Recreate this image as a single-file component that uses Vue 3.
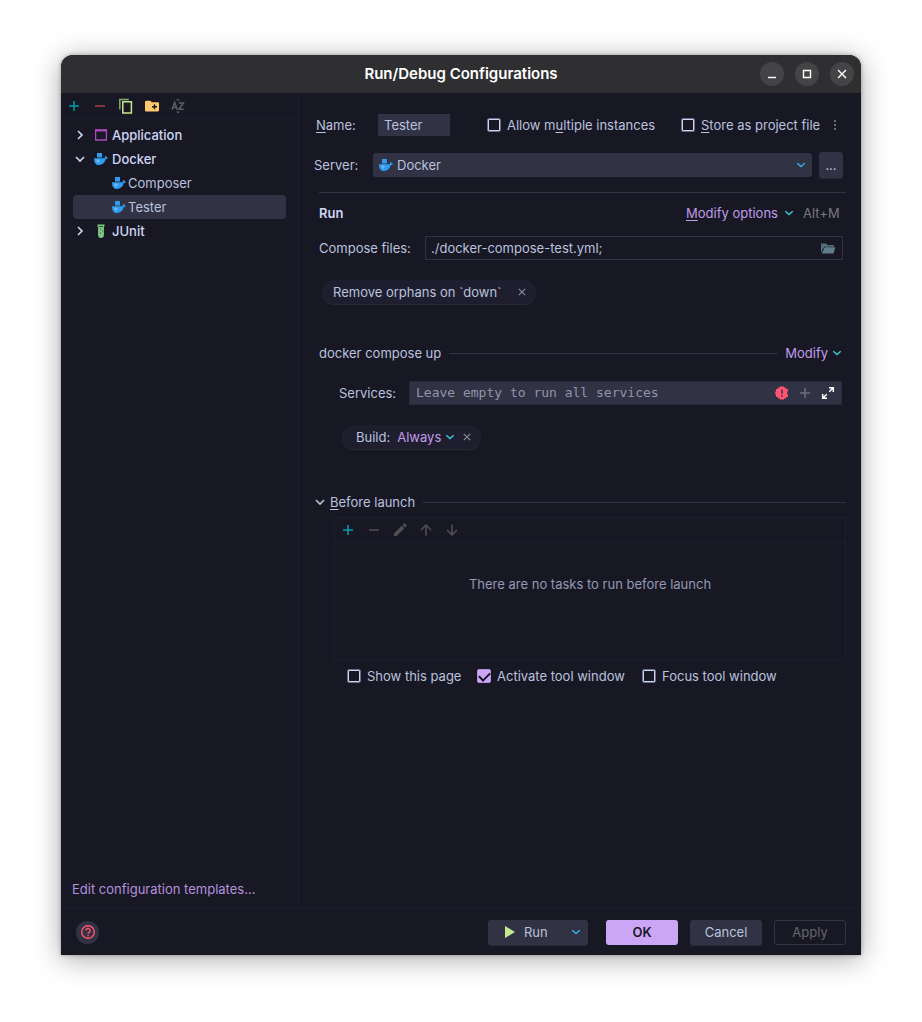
<script setup>
import { ref } from 'vue'

const name = ref('Tester')
const server = ref('Docker')
const files = ref('./docker-compose-test.yml;')
const services = ref('')
const multiple = ref(false)
const stored = ref(false)
const showPage = ref(false)
const activate = ref(true)
const focus = ref(false)

const tree = [
  { label: 'Application', icon: 'frame', arrow: 'right' },
  { label: 'Docker', icon: 'whale', arrow: 'down' },
  { label: 'Composer', icon: 'whale', child: true },
  { label: 'Tester', icon: 'whale', child: true, selected: true },
  { label: 'JUnit', icon: 'tube', arrow: 'right' },
]
</script>

<template>
  <svg class="defs" width="0" height="0" aria-hidden="true">
    <symbol id="plus" viewBox="0 0 16 16"><path d="M8 3v10M3 8h10" fill="none" stroke="currentColor" stroke-width="1.5" /></symbol>
    <symbol id="minus" viewBox="0 0 16 16"><path d="M3 8h10" fill="none" stroke="currentColor" stroke-width="1.5" /></symbol>
    <symbol id="chev" viewBox="0 0 12 12"><path d="M2.300 4.200L6 7.600l3.700-3.400" fill="none" stroke="currentColor" stroke-width="1.5" /></symbol>
    <symbol id="right" viewBox="0 0 16 16"><path d="M6 4l4 4-4 4" fill="none" stroke="currentColor" stroke-width="1.6" /></symbol>
    <symbol id="down" viewBox="0 0 16 16"><path d="M4 6l4 4 4-4" fill="none" stroke="currentColor" stroke-width="1.6" /></symbol>
    <symbol id="cross" viewBox="0 0 16 16"><path d="M4.800 4.800l6.400 6.400M11.200 4.800l-6.400 6.400" fill="none" stroke="currentColor" stroke-width="1.2" /></symbol>
    <symbol id="whale" viewBox="0 0 16 16">
      <path d="M4 2h5v4.500H4zM1 7.200h10.600c.3-.5.4-1.200.3-2l.6-.4c.7.500 1 1.100 1.100 1.700.5-.1 1.100 0 1.500.3-.4.900-1.300 1.300-2.400 1.300C11.900 11.600 9.500 14 6 14c-3.200 0-5-2.200-5-6.800z" fill="#2f9bf0" />
      <circle cx="5" cy="10" r="1.200" fill="none" stroke="#9ad1ff" stroke-width=".7" />
    </symbol>
    <symbol id="frame" viewBox="0 0 16 16"><path d="M2.600 3h10.800v10H2.600z" fill="none" stroke="#ab47bc" stroke-width="1.300" /><path d="M2 2.500h12v2H2z" fill="#ab47bc" /></symbol>
    <symbol id="tube" viewBox="0 0 16 16">
      <path d="M4.500 1.500h7v2h-.6V12a2.900 2.900 0 0 1-5.800 0V3.500h-.6z" fill="#81c784" />
      <path d="M6 3.500h4M7 6h1M9 8h1M7 10h1" stroke="#1b5e20" stroke-width="1.100" />
    </symbol>
    <symbol id="folder" viewBox="0 0 16 16"><path d="M1 12.500V3.500h5.200l1.400 1.500H14v1.700H4.300z" fill="#546e7a" /><path d="M4.700 7.300H15.300L13.500 13.500H1.800z" fill="#607d8b" /></symbol>
  </svg>

  <main class="window">
    <header class="titlebar">
      <h1>Run/Debug Configurations</h1>
      <div class="wm">
        <button type="button" aria-label="Minimize"><svg viewBox="0 0 24 24"><path d="M8 15.500h8" /></svg></button>
        <button type="button" aria-label="Maximize"><svg viewBox="0 0 24 24"><path d="M8.500 8.500h7v7h-7z" /></svg></button>
        <button type="button" aria-label="Close"><svg viewBox="0 0 24 24"><path d="M8 8l8 8M16 8l-8 8" /></svg></button>
      </div>
    </header>

    <div class="body">
      <aside class="sidebar">
        <div class="tools">
          <button type="button" aria-label="Add" class="teal"><svg class="ic"><use href="#plus" /></svg></button>
          <button type="button" aria-label="Remove" class="red"><svg class="ic"><use href="#minus" /></svg></button>
          <button type="button" aria-label="Copy">
            <svg class="ic" viewBox="0 0 16 16" fill="none"><path d="M1.800 11.500V1.500h9" stroke="#87a86b" stroke-width="1.500" /><path d="M4.800 3.800h8.600v11.200H4.800z" stroke="#c3e88d" stroke-width="1.500" /></svg>
          </button>
          <button type="button" aria-label="New folder">
            <svg class="ic" viewBox="0 0 16 16"><path d="M1 4a1.300 1.300 0 0 1 1.300-1.300h4L7.800 4.200h6A1.200 1.200 0 0 1 15 5.400v6.800a1.200 1.200 0 0 1-1.200 1.200H2.200A1.200 1.200 0 0 1 1 12.200z" fill="#ffca6b" /><path d="M10.500 6.300v5M8 8.800h5" stroke="#181825" stroke-width="1.400" /></svg>
          </button>
          <button type="button" aria-label="Sort" disabled>
            <svg class="ic" viewBox="0 0 16 16" fill="none" stroke="#5c5c62" stroke-width="1.500"><path d="M2 11.800L4.700 4.400l2.700 7.400M2.900 9.600h3.600M8.800 5h4.600L9 11.200h4.800" /><path d="M6 2.600l2-2 2 2zM6 13.400l2 2 2-2z" fill="#5c5c62" stroke="none" /></svg>
          </button>
        </div>
        <ul class="tree">
          <li v-for="(n, i) in tree" :key="i" :class="{ child: n.child, selected: n.selected }">
            <svg v-if="n.arrow" class="ic arrow"><use :href="'#' + n.arrow" /></svg>
            <svg class="ic"><use :href="'#' + n.icon" /></svg>
            <span>{{ n.label }}</span>
          </li>
        </ul>
        <a class="templates" href="#">Edit configuration templates...</a>
      </aside>

      <section class="form">
        <div class="row name-row">
          <label class="name-label" for="name"><u>N</u>ame:</label>
          <input id="name" v-model="name" class="name" type="text" />
          <label class="check first"><input v-model="multiple" type="checkbox" /><span>Allow m<u>u</u>ltiple instances</span></label>
          <label class="check second"><input v-model="stored" type="checkbox" /><span><u>S</u>tore as project file</span></label>
          <button type="button" class="dots" aria-label="More"><svg viewBox="0 0 4 12"><path d="M1 1h2v2H1zM1 5h2v2H1zM1 9h2v2H1z" fill="#6b6b70" /></svg></button>
        </div>

        <div class="row server-row">
          <label class="server-label" for="server">Server:</label>
          <div class="combo">
            <svg class="ic"><use href="#whale" /></svg>
            <select id="server" v-model="server"><option>Docker</option></select>
            <svg class="ic small sky"><use href="#chev" /></svg>
          </div>
          <button type="button" class="btn more">...</button>
        </div>

        <hr />

        <div class="row run-row">
          <h2>Run</h2>
          <button type="button" class="link"><span><u>M</u>odify options</span><svg class="ic small teal2"><use href="#chev" /></svg></button>
          <span class="hint">Alt+M</span>
        </div>

        <div class="row files-row">
          <label for="files">Compose files:</label>
          <div class="files">
            <input id="files" v-model="files" type="text" />
            <button type="button" aria-label="Browse"><svg class="ic"><use href="#folder" /></svg></button>
          </div>
        </div>

        <div class="chip orphans">
          <span>Remove orphans on `down`</span>
          <button type="button" aria-label="Remove option"><svg class="ic"><use href="#cross" /></svg></button>
        </div>

        <div class="row up-row">
          <h3>docker compose up</h3>
          <i class="line"></i>
          <button type="button" class="link"><span>Modify</span><svg class="ic small teal2"><use href="#chev" /></svg></button>
        </div>

        <div class="row services-row">
          <label for="services">Services:</label>
          <div class="services">
            <input id="services" v-model="services" type="text" placeholder="Leave empty to run all services" />
            <svg class="ic" viewBox="0 0 16 16"><path d="M6 1.500h4v1h2v1.500h2v2.500h-.8v3H14V12h-2v1.500h-2v1H6v-1H4V12H2V9.500h-.8v-3H2V4h2V2.500h2z" fill="#ff5370" /><path d="M8 4.500v4.300M8 10v1.800" stroke="#313244" stroke-width="1.500" /></svg>
            <button type="button" aria-label="Add service" class="gray"><svg class="ic"><use href="#plus" /></svg></button>
            <button type="button" aria-label="Expand"><svg class="ic" viewBox="0 0 16 16"><path d="M9 2.700h4.300V7M13 3L9.300 6.700M7 13.300H2.700V9M3 13l3.700-3.700" fill="none" stroke="#fff" stroke-width="1.500" /></svg></button>
          </div>
        </div>

        <div class="chip build">
          <span>Build:</span>
          <button type="button" class="link"><span>Always</span><svg class="ic small teal2"><use href="#chev" /></svg></button>
          <button type="button" aria-label="Remove build"><svg class="ic"><use href="#cross" /></svg></button>
        </div>

        <div class="row before-row">
          <button type="button" class="fold"><svg class="ic"><use href="#down" /></svg><span><u>B</u>efore launch</span></button>
          <i class="line"></i>
        </div>

        <div class="tasks">
          <div class="tools">
            <button type="button" aria-label="Add task" class="teal"><svg class="ic"><use href="#plus" /></svg></button>
            <button type="button" aria-label="Remove task" class="dim" disabled><svg class="ic"><use href="#minus" /></svg></button>
            <button type="button" aria-label="Edit task" class="dim" disabled><svg class="ic" viewBox="0 0 16 16" fill="currentColor"><path d="M2 11.400L9.700 3.700l2.600 2.600L4.600 14H2zM10.500 2.900l1.300-1.300a.8.8 0 0 1 1.100 0l1.500 1.500a.8.8 0 0 1 0 1.100l-1.300 1.300z" /></svg></button>
            <button type="button" aria-label="Move up" class="dim" disabled><svg class="ic" viewBox="0 0 16 16" fill="none" stroke="currentColor" stroke-width="1.500"><path d="M8 13.500V3.500M3 8l5-5 5 5" /></svg></button>
            <button type="button" aria-label="Move down" class="dim" disabled><svg class="ic" viewBox="0 0 16 16" fill="none" stroke="currentColor" stroke-width="1.500"><path d="M8 2.500v10M3 8l5 5 5-5" /></svg></button>
          </div>
          <p>There are no tasks to run before launch</p>
        </div>

        <div class="row checks">
          <label class="check"><input v-model="showPage" type="checkbox" /><span>Show this page</span></label>
          <label class="check wide"><input v-model="activate" type="checkbox" /><span>Activate tool window</span></label>
          <label class="check"><input v-model="focus" type="checkbox" /><span>Focus tool window</span></label>
        </div>
      </section>
    </div>

    <footer class="footer">
      <button type="button" class="help" aria-label="Help">
        <svg class="ic" viewBox="0 0 16 16" fill="none" stroke="#ff5370" stroke-width="1.400"><circle cx="8" cy="8" r="6.300" /><path d="M5.900 6.600a2.100 2.100 0 1 1 3.200 1.700C8.300 8.800 8 9 8 10M8 11v1.300" /></svg>
      </button>
      <div class="btn split">
        <button type="button"><svg class="play" viewBox="0 0 10 12"><path d="M0 0l10 6-10 6z" fill="#c3e88d" /></svg>Run</button>
        <button type="button" aria-label="Run options"><svg class="ic small sky"><use href="#chev" /></svg></button>
      </div>
      <button type="button" class="btn ok">OK</button>
      <button type="button" class="btn">Cancel</button>
      <button type="button" class="btn apply" disabled>Apply</button>
    </footer>
  </main>
</template>

<style>
body { background: #fff; }
</style>

<style scoped>
* { box-sizing: border-box; }
.defs { position: absolute; }
.window {
  display: flex; flex-direction: column;
  min-height: calc(100vh - 122px);
  margin: 55px 61px 67px;
  background: #181825; color: #bac2de;
  font: 13px/16px Inter, "Noto Sans", sans-serif;
  border-radius: 12px 12px 0 0;
  box-shadow: 0 0 4px rgba(0, 0, 0, .3), 0 4px 28px rgba(0, 0, 0, .34);
}
button, input, select { font: inherit; color: inherit; background: none; border: 0; padding: 0; margin: 0; outline: 0; }
button { display: inline-flex; align-items: center; justify-content: center; }
h1, h2, h3, p, ul { margin: 0; padding: 0; font: inherit; }
u { text-decoration: underline; text-underline-offset: 2px; }
.ic { display: block; width: 16px; height: 16px; flex: none; }
.small { width: 12px; height: 12px; }
.teal { color: #009fae; }
.teal2 { color: #3fc7d0; }
.sky { color: #35aee6; }
.red { color: #a83f48; }
.gray { color: #6d6d75; }
.dim { color: #505054; }

.titlebar {
  display: grid; grid-template-columns: 1fr auto 1fr; align-items: center;
  height: 38px; padding: 0 7px;
  background: #2f2f31; border-radius: 12px 12px 0 0;
}
.titlebar h1 { grid-column: 2; color: #fff; font-size: 15px; font-weight: 600; }
.wm { display: flex; gap: 11px; justify-content: flex-end; }
.wm button { width: 24px; height: 24px; border-radius: 50%; background: #444446; }
.wm svg { width: 24px; height: 24px; fill: none; stroke: #fff; stroke-width: 1.4; }

.body { display: grid; grid-template-columns: 238px 1fr; flex: 1; }
.sidebar { display: flex; flex-direction: column; border-right: 1px solid #1e1e2e; }
.tools { display: flex; gap: 10px; align-items: center; height: 26px; padding: 0 5px; border-bottom: 1px solid #1e1e2e; }
.tree { list-style: none; padding: 4px 12px; }
.tree li { display: flex; align-items: center; height: 24px; border-radius: 4px; color: #cdd6f4; font-weight: 500; }
.tree li span { padding-left: 3px; }
.tree .arrow { margin: 0 5px 0 -1px; }
.tree .child { padding-left: 38px; color: #bac2de; font-weight: 400; }
.tree .child span { padding-left: 1px; }
.tree .selected { background: #313244; }
.templates { margin: auto 0 11px 11px; color: #b491dc; text-decoration: none; }

.form { padding: 21px 15px 20px 20px; min-width: 0; }
.row { display: flex; align-items: center; height: 24px; }
.name-row { height: 22px; margin-left: -3px; }
.name-label { width: 62px; }
.name { width: 72px; height: 22px; padding: 0 6px; background: #313244; }
.check { display: flex; align-items: center; gap: 6px; white-space: nowrap; }
.check input {
  appearance: none; display: grid; place-items: center;
  width: 14px; height: 14px; border: 1px solid #6c7086; border-radius: 2px;
  box-shadow: inset 0 0 0 1px #cdd6f4;
}
.check input:checked { background: #cba6f7; border-color: #b18fdc; box-shadow: none; }
.check input:checked::before {
  content: ""; width: 9px; height: 5px; margin-bottom: 2px;
  border: solid #181825; border-width: 0 0 2px 2px; transform: rotate(-45deg);
}
.first { min-width: 171px; margin-left: auto; }
.second { min-width: 143px; margin-left: 23px; }
.dots { width: 4px; margin: 0 9px; }
.dots svg { width: 4px; height: 12px; }
.server-row { height: 26px; margin: 16px 3px 0 -5px; }
.server-label { width: 59px; }
.combo { display: flex; align-items: center; flex: 1; height: 24px; padding: 0 5px; background: #313244; border-radius: 3px; }
.combo select { appearance: none; flex: 1; padding-left: 3px; }
.btn {
  display: inline-flex; justify-content: center; align-items: center;
  width: 72px; height: 25px; border-radius: 3px;
  background: #313244; box-shadow: 0 1px #29293a;
}
.more { width: 24px; height: 26px; margin-left: 7px; }
hr { height: 1px; margin: 14px 0 0; border: 0; background: #313244; }
.run-row { margin: 8px 5px 0 0; }
.run-row h2 { margin-right: auto; font-weight: 600; color: #cdd6f4; }
.run-row .link { min-width: 109px; justify-content: space-between; }
.link { gap: 3px; color: #c09be9; }
.hint { min-width: 38px; margin-left: 8px; color: #77777f; }
.files-row { margin: 11px 3px 0 0; }
.files-row label { width: 106px; }
.files { display: flex; flex: 1; height: 24px; padding: 0 6px 0 5px; border: 1px solid #313244; }
.files input { flex: 1; min-width: 0; }
.chip { display: flex; align-items: center; width: max-content; height: 24px; border-radius: 12px; background: #1e1e2e; box-shadow: 0 1px #292930; color: #bac2de; }
.chip > button:last-child { color: #868a96; }
.orphans { min-width: 214px; justify-content: space-between; gap: 5px; margin: 20px 0 0 3px; padding: 0 6px 0 11px; }
.up-row { margin: 37px 3px 0 0; }
.line { flex: 1; height: 1px; background: #313244; margin-left: 8px; }
.up-row .link { margin-left: 7px; }
.services-row { margin: 16px 4px 0 20px; }
.services-row label { width: 70px; }
.services { display: flex; align-items: center; gap: 7px; flex: 1; height: 24px; padding: 0 5px 0 6px; background: #313244; border: 1px solid #29293b; }
.services input { flex: 1; min-width: 0; font: 13px/16px "DejaVu Sans Mono", monospace; }
.services input::placeholder { color: #9095ab; opacity: 1; }
.build { margin: 20px 0 0 23px; padding: 0 6px 0 14px; }
.build .link { margin: 0 3px 0 7px; }
.before-row { margin-top: 41px; }
.fold { gap: 2px; margin-left: -7px; }
.tasks { min-height: 143px; margin: 3px 0 0 15px; border: 1px solid #1e1e2e; }
.tasks .tools { height: 25px; }
.tasks p { padding-top: 33px; text-align: center; color: #9399b2; }
.checks { gap: 13px; margin: 4px 0 0 28px; }
.checks .check { min-width: 117px; }
.checks .wide { min-width: 152px; }

.footer { display: flex; align-items: center; height: 47px; padding: 0 15px; border-top: 1px solid #1e1e2e; }
.footer .btn { margin-left: 12px; }
.help { width: 23px; height: 23px; margin-right: auto; border-radius: 50%; background: #313244; }
.footer .split { width: 100px; margin-right: 6px; padding: 0 6px 0 17px; justify-content: space-between; }
.play { width: 10px; height: 12px; margin-right: 9px; }
.footer .ok { background: #cba6f7; color: #181825; font-weight: 600; box-shadow: none; }
.footer .apply { border: 1px solid #313244; background: none; color: #66666c; box-shadow: none; }
</style>
